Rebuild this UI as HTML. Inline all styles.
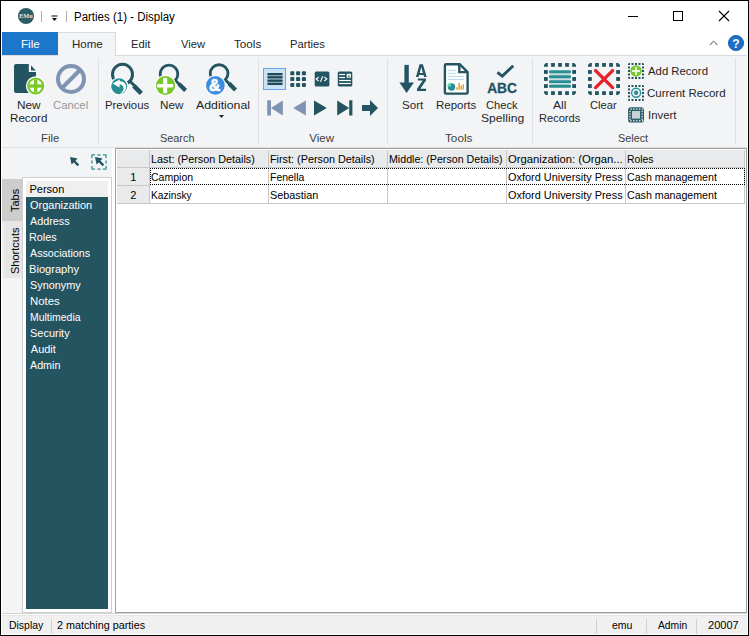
<!DOCTYPE html>
<html><head><meta charset="utf-8">
<style>
*{box-sizing:border-box;margin:0;padding:0}
html,body{width:749px;height:636px;overflow:hidden;background:#fff}
body{position:relative;font-family:"Liberation Sans",sans-serif;color:#000}
.a{position:absolute}
.t{position:absolute;white-space:nowrap;line-height:1;transform-origin:0 0}
.r{background:#f3f4f6}
.lbl{font-size:11.5px;color:#3c3c3c}
.grp{font-size:11.5px;color:#555}
.g{font-size:11px;color:#000}
svg{position:absolute;overflow:visible}
</style></head><body>
<!-- window frame -->
<div class="a" style="left:0;top:0;width:749px;height:636px;border:1px solid #000"></div>

<!-- title bar -->
<svg style="left:18px;top:8px" width="16" height="16" viewBox="0 0 16 16"><circle cx="8" cy="8" r="8" fill="#2c5c66"/><text x="1.2" y="10.3" font-family="Liberation Serif" font-size="6.6" font-weight="bold" fill="#dfe8ea" textLength="13.6" lengthAdjust="spacingAndGlyphs">EMu</text></svg>
<div class="a" style="left:41px;top:11px;width:1px;height:11px;background:#b0b0b0"></div>
<svg style="left:51px;top:15px" width="7" height="7" viewBox="0 0 7 7"><rect x="0.5" y="0.5" width="6" height="1" fill="#000"/><path d="M1 3 L6 3 L3.5 6 Z" fill="#000"/></svg>
<div class="a" style="left:66px;top:11px;width:1px;height:11px;background:#b0b0b0"></div>
<!-- caption buttons -->
<div class="a" style="left:628px;top:16px;width:10px;height:1px;background:#000"></div>
<div class="a" style="left:673px;top:11px;width:10px;height:10px;border:1px solid #000"></div>
<svg style="left:719px;top:11px" width="10" height="10" viewBox="0 0 10 10"><path d="M0 0 L10 10 M10 0 L0 10" stroke="#000" stroke-width="1.1"/></svg>

<!-- tab row -->
<div class="a" style="left:2px;top:32px;width:56px;height:23px;background:#1c76ca"></div>
<div class="a r" style="left:58px;top:32px;width:58px;height:24px;border-top:1px solid #dadbdc;border-right:1px solid #dadbdc"></div>
<svg style="left:709px;top:40px" width="10" height="6" viewBox="0 0 10 6"><path d="M0.8 5 L4.5 1.2 L8.5 5" stroke="#888" stroke-width="1.1" fill="none"/></svg>
<svg style="left:728px;top:35px" width="16" height="16" viewBox="0 0 16 16"><circle cx="8" cy="8" r="7.6" fill="#1a6fc6" stroke="#0d4f9a" stroke-width="0.8"/><text x="8" y="12.5" font-family="Liberation Sans" font-weight="bold" font-size="12" fill="#fff" text-anchor="middle">?</text></svg>

<!-- ribbon -->
<div class="a" style="left:2px;top:55px;width:56px;height:1px;background:#dadbdc"></div>
<div class="a" style="left:116px;top:55px;width:631px;height:1px;background:#dadbdc"></div>
<div class="a r" style="left:2px;top:56px;width:745px;height:91px"></div>
<div class="a" style="left:2px;top:147px;width:745px;height:1px;background:#dfe0e1"></div>
<div class="a" style="left:98px;top:58px;width:1px;height:86px;background:#e0e1e3"></div>
<div class="a" style="left:258px;top:58px;width:1px;height:86px;background:#e0e1e3"></div>
<div class="a" style="left:387px;top:58px;width:1px;height:86px;background:#e0e1e3"></div>
<div class="a" style="left:532px;top:58px;width:1px;height:86px;background:#e0e1e3"></div>
<div class="a" style="left:735px;top:58px;width:1px;height:86px;background:#e0e1e3"></div>

<!-- ribbon labels -->
<svg style="left:219px;top:115px" width="6" height="4" viewBox="0 0 6 4"><path d="M0 0 L5 0 L2.5 3 Z" fill="#222"/></svg>

<!-- left panel -->
<div class="a r" style="left:2px;top:148px;width:110px;height:465px"></div>
<div class="a" style="left:112px;top:148px;width:3px;height:465px;background:#fff"></div>
<!-- vertical tabs -->
<div class="a" style="left:2px;top:179px;width:20px;height:42px;background:#cdcdcd"></div>
<div class="a" style="left:2px;top:221px;width:20px;height:57px;background:#e6e6e6;border-left:2px solid #eeeeee"></div>
<!-- tab panel frame -->
<div class="a" style="left:22px;top:177px;width:90px;height:436px;border:1px solid #d0d0d0;background:#fff"></div>
<div class="a" style="left:26px;top:181px;width:82px;height:16px;background:#efefef"></div>
<div class="a" style="left:26px;top:197px;width:82px;height:412px;background:#255461"></div>

<!-- grid -->
<div class="a" style="left:115px;top:148px;width:632px;height:465px;border:1px solid #a0a0a0;border-right:1px solid #a0a0a0;background:#fff"></div>
<div class="a" style="left:117px;top:150px;width:628px;height:17px;background:#e9eaec"></div>
<div class="a" style="left:117px;top:167px;width:628px;height:1px;background:#c8c8c8"></div>
<div class="a" style="left:117px;top:168px;width:32px;height:35px;background:#e9eaec"></div>
<div class="a" style="left:117px;top:185px;width:32px;height:1px;background:#c8c8c8"></div>
<div class="a" style="left:117px;top:203px;width:628px;height:1px;background:#c8c8c8"></div>
<div class="a" style="left:149px;top:150px;width:1px;height:53px;background:#c8c8c8"></div>
<div class="a" style="left:268px;top:150px;width:1px;height:53px;background:#c8c8c8"></div>
<div class="a" style="left:387px;top:150px;width:1px;height:53px;background:#c8c8c8"></div>
<div class="a" style="left:506px;top:150px;width:1px;height:53px;background:#c8c8c8"></div>
<div class="a" style="left:625px;top:150px;width:1px;height:53px;background:#c8c8c8"></div>
<div class="a" style="left:744px;top:150px;width:1px;height:53px;background:#c8c8c8"></div>
<div class="a" style="left:150px;top:168px;width:595px;height:17px;border:1px dotted #000"></div>

<!-- status bar -->
<div class="a" style="left:2px;top:613px;width:745px;height:1px;background:#d2d2d2"></div>
<div class="a" style="left:2px;top:615px;width:745px;height:1px;background:#e6e6e6"></div>
<div class="a" style="left:2px;top:616px;width:745px;height:18px;background:#f0f0f0"></div>
<div class="a" style="left:51px;top:619px;width:1px;height:15px;background:#d0d0d0"></div>
<div class="a" style="left:596px;top:619px;width:1px;height:15px;background:#d0d0d0"></div>
<div class="a" style="left:646px;top:619px;width:1px;height:15px;background:#d0d0d0"></div>
<div class="a" style="left:696px;top:619px;width:1px;height:15px;background:#d0d0d0"></div>

<div class="t" style="left:10.3px;top:211.5px;font-size:11px;transform:rotate(-90deg);transform-origin:0 0">Tabs</div>
<div class="t" style="left:10.3px;top:274px;font-size:11px;transform:rotate(-90deg);transform-origin:0 0">Shortcuts</div>
<div class="t" style="left:74.14px;top:11px;font-size:12px;font-weight:400;color:#000;transform:scaleX(0.957)">Parties (1) - Display</div>
<div class="t" style="left:20.79px;top:39px;font-size:11.5px;font-weight:400;color:#fff;transform:scaleX(1.006)">File</div>
<div class="t" style="left:71.60px;top:39px;font-size:11.5px;font-weight:400;color:#262626;transform:scaleX(1.003)">Home</div>
<div class="t" style="left:131.13px;top:39px;font-size:11.5px;font-weight:400;color:#262626;transform:scaleX(0.974)">Edit</div>
<div class="t" style="left:180.90px;top:39px;font-size:11.5px;font-weight:400;color:#262626;transform:scaleX(0.968)">View</div>
<div class="t" style="left:234.20px;top:39px;font-size:11.5px;font-weight:400;color:#262626;transform:scaleX(1.015)">Tools</div>
<div class="t" style="left:290.43px;top:39px;font-size:11.5px;font-weight:400;color:#262626;transform:scaleX(0.974)">Parties</div>
<div class="t" style="left:16.78px;top:100px;font-size:11.5px;font-weight:400;color:#262626;transform:scaleX(1.023)">New</div>
<div class="t" style="left:9.59px;top:113px;font-size:11.5px;font-weight:400;color:#262626;transform:scaleX(1.009)">Record</div>
<div class="t" style="left:52.72px;top:100px;font-size:11.5px;font-weight:400;color:#999;transform:scaleX(0.982)">Cancel</div>
<div class="t" style="left:41.02px;top:133px;font-size:11.5px;font-weight:400;color:#3e3e3e;transform:scaleX(0.982)">File</div>
<div class="t" style="left:104.51px;top:100px;font-size:11.5px;font-weight:400;color:#262626;transform:scaleX(0.986)">Previous</div>
<div class="t" style="left:159.79px;top:100px;font-size:11.5px;font-weight:400;color:#262626;transform:scaleX(1.014)">New</div>
<div class="t" style="left:195.50px;top:100px;font-size:11.5px;font-weight:400;color:#262626;transform:scaleX(1.070)">Additional</div>
<div class="t" style="left:159.85px;top:133px;font-size:11.5px;font-weight:400;color:#3e3e3e;transform:scaleX(0.946)">Search</div>
<div class="t" style="left:309.30px;top:133px;font-size:11.5px;font-weight:400;color:#3e3e3e;transform:scaleX(1.000)">View</div>
<div class="t" style="left:401.90px;top:100px;font-size:11.5px;font-weight:400;color:#262626;transform:scaleX(1.005)">Sort</div>
<div class="t" style="left:436.00px;top:100px;font-size:11.5px;font-weight:400;color:#262626;transform:scaleX(0.997)">Reports</div>
<div class="t" style="left:486.13px;top:100px;font-size:11.5px;font-weight:400;color:#262626;transform:scaleX(0.971)">Check</div>
<div class="t" style="left:481.05px;top:113px;font-size:11.5px;font-weight:400;color:#262626;transform:scaleX(1.054)">Spelling</div>
<div class="t" style="left:445.40px;top:133px;font-size:11.5px;font-weight:400;color:#3e3e3e;transform:scaleX(1.019)">Tools</div>
<div class="t" style="left:553.30px;top:100px;font-size:11.5px;font-weight:400;color:#262626;transform:scaleX(1.058)">All</div>
<div class="t" style="left:538.94px;top:113px;font-size:11.5px;font-weight:400;color:#262626;transform:scaleX(0.963)">Records</div>
<div class="t" style="left:589.83px;top:100px;font-size:11.5px;font-weight:400;color:#262626;transform:scaleX(0.973)">Clear</div>
<div class="t" style="left:617.96px;top:133px;font-size:11.5px;font-weight:400;color:#3e3e3e;transform:scaleX(0.942)">Select</div>
<div class="t" style="left:647.90px;top:66px;font-size:11.5px;font-weight:400;color:#262626;transform:scaleX(0.987)">Add Record</div>
<div class="t" style="left:646.90px;top:88px;font-size:11.5px;font-weight:400;color:#262626;transform:scaleX(0.999)">Current Record</div>
<div class="t" style="left:647.51px;top:110px;font-size:11.5px;font-weight:400;color:#262626;transform:scaleX(0.986)">Invert</div>
<div class="t" style="left:151.12px;top:154px;font-size:11px;font-weight:400;color:#000;transform:scaleX(0.982)">Last: (Person Details)</div>
<div class="t" style="left:270.02px;top:154px;font-size:11px;font-weight:400;color:#000;transform:scaleX(0.984)">First: (Person Details)</div>
<div class="t" style="left:389.23px;top:154px;font-size:11px;font-weight:400;color:#000;transform:scaleX(0.968)">Middle: (Person Details)</div>
<div class="t" style="left:508.08px;top:154px;font-size:11px;font-weight:400;color:#000;transform:scaleX(1.025)">Organization: (Organ...</div>
<div class="t" style="left:626.86px;top:154px;font-size:11px;font-weight:400;color:#000;transform:scaleX(0.944)">Roles</div>
<div class="t" style="left:130.30px;top:172px;font-size:11px;font-weight:400;color:#000;transform:scaleX(1.000)">1</div>
<div class="t" style="left:130.30px;top:190px;font-size:11px;font-weight:400;color:#000;transform:scaleX(1.000)">2</div>
<div class="t" style="left:151.14px;top:172px;font-size:11px;font-weight:400;color:#000;transform:scaleX(0.957)">Campion</div>
<div class="t" style="left:270.05px;top:172px;font-size:11px;font-weight:400;color:#000;transform:scaleX(0.951)">Fenella</div>
<div class="t" style="left:508.11px;top:172px;font-size:11px;font-weight:400;color:#000;transform:scaleX(0.992)">Oxford University Press</div>
<div class="t" style="left:626.83px;top:172px;font-size:11px;font-weight:400;color:#000;transform:scaleX(0.967)">Cash management</div>
<div class="t" style="left:151.18px;top:190px;font-size:11px;font-weight:400;color:#000;transform:scaleX(0.923)">Kazinsky</div>
<div class="t" style="left:270.01px;top:190px;font-size:11px;font-weight:400;color:#000;transform:scaleX(0.985)">Sebastian</div>
<div class="t" style="left:508.11px;top:190px;font-size:11px;font-weight:400;color:#000;transform:scaleX(0.992)">Oxford University Press</div>
<div class="t" style="left:626.83px;top:190px;font-size:11px;font-weight:400;color:#000;transform:scaleX(0.967)">Cash management</div>
<div class="t" style="left:29.50px;top:184px;font-size:11px;font-weight:400;color:#000;transform:scaleX(1.000)">Person</div>
<div class="t" style="left:29.90px;top:200px;font-size:11px;font-weight:400;color:#fff;transform:scaleX(0.997)">Organization</div>
<div class="t" style="left:30.30px;top:216px;font-size:11px;font-weight:400;color:#fff;transform:scaleX(0.982)">Address</div>
<div class="t" style="left:29.31px;top:232px;font-size:11px;font-weight:400;color:#fff;transform:scaleX(0.985)">Roles</div>
<div class="t" style="left:30.30px;top:248px;font-size:11px;font-weight:400;color:#fff;transform:scaleX(0.974)">Associations</div>
<div class="t" style="left:29.19px;top:264px;font-size:11px;font-weight:400;color:#fff;transform:scaleX(1.010)">Biography</div>
<div class="t" style="left:29.81px;top:280px;font-size:11px;font-weight:400;color:#fff;transform:scaleX(0.988)">Synonymy</div>
<div class="t" style="left:29.76px;top:296px;font-size:11px;font-weight:400;color:#fff;transform:scaleX(1.037)">Notes</div>
<div class="t" style="left:29.85px;top:312px;font-size:11px;font-weight:400;color:#fff;transform:scaleX(0.950)">Multimedia</div>
<div class="t" style="left:29.80px;top:328px;font-size:11px;font-weight:400;color:#fff;transform:scaleX(0.997)">Security</div>
<div class="t" style="left:30.80px;top:344px;font-size:11px;font-weight:400;color:#fff;transform:scaleX(1.000)">Audit</div>
<div class="t" style="left:30.20px;top:360px;font-size:11px;font-weight:400;color:#fff;transform:scaleX(0.973)">Admin</div>
<div class="t" style="left:9.15px;top:620px;font-size:11px;font-weight:400;color:#000;transform:scaleX(0.949)">Display</div>
<div class="t" style="left:57.42px;top:620px;font-size:11px;font-weight:400;color:#000;transform:scaleX(0.980)">2 matching parties</div>
<div class="t" style="left:612.24px;top:620px;font-size:11px;font-weight:400;color:#000;transform:scaleX(0.955)">emu</div>
<div class="t" style="left:658.20px;top:620px;font-size:11px;font-weight:400;color:#000;transform:scaleX(0.937)">Admin</div>
<div class="t" style="left:707.80px;top:620px;font-size:11px;font-weight:400;color:#000;transform:scaleX(1.003)">20007</div>
<svg style="left:0;top:0" width="749" height="150" viewBox="0 0 749 150">
<path d="M16 64 H28.8 V72 H36 V91 Q36 93 34 93 H16 Q14 93 14 91 V66 Q14 64 16 64 Z" fill="#235461"/>
<path d="M31 65.5 V70.5 H35.8 Z" fill="#235461"/>
<circle cx="35.7" cy="86" r="9.8" fill="#fff"/>
<circle cx="35.7" cy="86" r="7.5" fill="#fff" stroke="#78c82c" stroke-width="2.2"/>
<rect x="29.2" y="84.3" width="13" height="3.4" fill="#78c82c"/><rect x="34" y="79.6" width="3.4" height="12.8" fill="#78c82c"/>
<circle cx="71" cy="79" r="13" fill="none" stroke="#7f93b3" stroke-width="4"/>
<path d="M80.5 69.5 L61.5 88.5" stroke="#7f93b3" stroke-width="4"/>
<circle cx="122.5" cy="74.3" r="10" fill="none" stroke="#235461" stroke-width="3"/>
<path d="M130 81.3 L134.5 85.8" stroke="#235461" stroke-width="3"/>
<path d="M133.8 85.8 L141.3 93.3" stroke="#235461" stroke-width="4.6"/>
<circle cx="119.2" cy="86.3" r="9.2" fill="#fff"/>
<circle cx="119.2" cy="86.3" r="8" fill="#2a8f94"/>
<path d="M112.6 83.4 L119.8 79.4 L119.7 81.3 C124 81.2 126.4 84.5 126.1 87.6 C125.8 91 123.2 93.6 120 94.1 L121.6 92.4 C123.6 91 124.1 88.6 123.1 86.6 C122.1 84.8 120.6 84.4 119.6 84.7 L119.5 87.5 Z" fill="#fff"/>
<circle cx="169" cy="74" r="8.85" fill="none" stroke="#235461" stroke-width="2.8"/>
<path d="M175 80 L179.5 84.5" stroke="#235461" stroke-width="2.8"/>
<path d="M179 84 L185.6 90.6" stroke="#235461" stroke-width="4.2"/>
<circle cx="165.5" cy="85.5" r="10.6" fill="#fff"/>
<circle cx="165.5" cy="85.5" r="9.6" fill="#78c82c"/>
<rect x="157.1" y="83.9" width="16.1" height="3.5" rx="0.8" fill="#fff"/><rect x="163.2" y="77.9" width="4" height="15.4" rx="0.8" fill="#fff"/>
<circle cx="219.1" cy="73.6" r="8.85" fill="none" stroke="#235461" stroke-width="2.8"/>
<path d="M225 79.5 L229.5 84" stroke="#235461" stroke-width="2.8"/>
<path d="M229 83.5 L235.5 90" stroke="#235461" stroke-width="4.2"/>
<circle cx="215.4" cy="85.4" r="10.4" fill="#fff"/>
<circle cx="215.4" cy="85.4" r="9.35" fill="#3d8ee0"/>
<text x="214.7" y="91.3" font-family="Liberation Sans" font-weight="bold" font-size="17" fill="#fff" stroke="#fff" stroke-width="0.7" text-anchor="middle" transform="translate(214.7 0) scale(0.92 1) translate(-214.7 0)">&amp;</text>
<rect x="263.5" y="68.5" width="22" height="21" fill="#cce3f7" stroke="#67a5ea" stroke-width="1"/>
<rect x="267.5" y="73.5" width="15" height="10.5" fill="#8ba6ae"/>
<rect x="267.3" y="73" width="15.4" height="2" rx="1" fill="#1d4c57"/>
<rect x="267.3" y="76.3" width="15.4" height="2" rx="1" fill="#1d4c57"/>
<rect x="267.3" y="79.7" width="15.4" height="2" rx="1" fill="#1d4c57"/>
<rect x="267.3" y="83" width="15.4" height="2" rx="1" fill="#1d4c57"/>
<rect x="290.3" y="71.3" width="4" height="4" rx="0.9" fill="#235461"/>
<rect x="296.1" y="71.3" width="4" height="4" rx="0.9" fill="#235461"/>
<rect x="301.9" y="71.3" width="4" height="4" rx="0.9" fill="#235461"/>
<rect x="290.3" y="77.1" width="4" height="4" rx="0.9" fill="#235461"/>
<rect x="296.1" y="77.1" width="4" height="4" rx="0.9" fill="#235461"/>
<rect x="301.9" y="77.1" width="4" height="4" rx="0.9" fill="#235461"/>
<rect x="290.3" y="82.9" width="4" height="4" rx="0.9" fill="#235461"/>
<rect x="296.1" y="82.9" width="4" height="4" rx="0.9" fill="#235461"/>
<rect x="301.9" y="82.9" width="4" height="4" rx="0.9" fill="#235461"/>
<rect x="314.7" y="71.5" width="14.7" height="15" rx="1.5" fill="#235461"/>
<path d="M318.6 77 L316.2 79 L318.6 81 M322.7 76.3 L320.5 81.7 M324.4 77 L326.8 79 L324.4 81" stroke="#fff" stroke-width="1.1" fill="none"/>
<rect x="337.8" y="71.5" width="14.5" height="15" rx="1.5" fill="#235461"/>
<rect x="339.2" y="73.9" width="5.8" height="1.2" fill="#fff"/><rect x="339.2" y="76.9" width="5.8" height="1.2" fill="#fff"/>
<rect x="339.2" y="79.9" width="11.7" height="1.2" fill="#fff"/><rect x="339.2" y="82.9" width="11.7" height="1.2" fill="#fff"/>
<rect x="346.6" y="73.8" width="4.3" height="3.9" fill="#fff"/><rect x="347.6" y="75.6" width="2.4" height="1.2" fill="#4d7580"/>
<rect x="267.2" y="100.3" width="3.8" height="15.2" fill="#7f93b3"/><path d="M271 107.9 L282.8 100.4 V115.4 Z" fill="#7f93b3"/>
<path d="M293.2 107.9 L305.9 100.4 V115.4 Z" fill="#7f93b3"/>
<path d="M314 100.4 V115.4 L326.8 107.9 Z" fill="#235461"/>
<path d="M337.2 100.4 V115.4 L349.2 107.9 Z" fill="#235461"/><rect x="349.2" y="100.3" width="3.2" height="15.2" fill="#235461"/>
<rect x="362" y="105" width="8.5" height="6" fill="#235461"/><path d="M370 100 L378 108 L370 116 Z" fill="#235461"/>
<rect x="404.4" y="64.9" width="4.4" height="18" fill="#235461"/><path d="M399.4 82.5 H413.9 L406.6 92.9 Z" fill="#235461"/>
<path fill-rule="evenodd" d="M415.9 76.9 L419.6 64.3 H422.9 L426.7 76.9 H424.1 L423.5 75 H419.1 L418.5 76.9 Z M419.7 73.1 H422.9 L421.3 67 Z" fill="#235461"/>
<path d="M417.8 78.4 H426 V80.6 L420.3 88.8 H426.1 V91 H417 V88.8 L422.7 80.6 H417.8 Z" fill="#235461"/>
<path d="M446.1 64.2 H459.6 L467.6 72.2 V92.4 Q467.6 93.6 466.4 93.6 H446.1 Q444.9 93.6 444.9 92.4 V65.4 Q444.9 64.2 446.1 64.2 Z" fill="#fff" stroke="#235461" stroke-width="2.4" stroke-linejoin="round"/>
<path d="M459.3 64.2 V72.1 H467.6" fill="none" stroke="#235461" stroke-width="2.4"/>
<rect x="448" y="69.8" width="8" height="1.1" fill="#bcdaf0"/>
<rect x="448" y="72.8" width="8" height="1.1" fill="#bcdaf0"/>
<rect x="448" y="75.9" width="16" height="1.1" fill="#bcdaf0"/>
<rect x="448" y="78.9" width="16" height="1.1" fill="#bcdaf0"/>
<circle cx="451.5" cy="87" r="3.7" fill="#2a8f94"/><path d="M451 86.4 H447.3 A3.7 3.7 0 0 1 451 82.7 Z" fill="#5fd8b4"/>
<rect x="456.3" y="87.2" width="1.4" height="2.5" fill="#e59c2c"/>
<rect x="458.4" y="83" width="1.4" height="6.7" fill="#e59c2c"/>
<rect x="460.5" y="85.6" width="1.4" height="4.1" fill="#e59c2c"/>
<rect x="462.6" y="84.2" width="1.4" height="5.5" fill="#e59c2c"/>
<path d="M497.4 72.3 L502.3 76.1 L513.2 65.7" fill="none" stroke="#235461" stroke-width="2.9"/>
<text x="487.2" y="92.6" font-family="Liberation Sans" font-weight="bold" font-size="15.2" fill="#235461" stroke="#235461" stroke-width="0.3" textLength="29.8" lengthAdjust="spacingAndGlyphs">ABC</text>
<path d="M545.90 63.00 H547.80 V66.80 H544.00 V64.90 Z" fill="#235461"/><rect x="544.00" y="70.05" width="3.8" height="3.8" fill="#235461"/><rect x="544.00" y="77.10" width="3.8" height="3.8" fill="#235461"/><rect x="544.00" y="84.15" width="3.8" height="3.8" fill="#235461"/><path d="M544.00 91.20 H547.80 V95.00 H545.90 L544.00 93.10 Z" fill="#235461"/><rect x="551.05" y="63.00" width="3.8" height="3.8" fill="#235461"/><rect x="551.05" y="91.20" width="3.8" height="3.8" fill="#235461"/><rect x="558.10" y="63.00" width="3.8" height="3.8" fill="#235461"/><rect x="558.10" y="91.20" width="3.8" height="3.8" fill="#235461"/><rect x="565.15" y="63.00" width="3.8" height="3.8" fill="#235461"/><rect x="565.15" y="91.20" width="3.8" height="3.8" fill="#235461"/><path d="M572.20 63.00 H574.10 L576.00 64.90 V66.80 H572.20 Z" fill="#235461"/><rect x="572.20" y="70.05" width="3.8" height="3.8" fill="#235461"/><rect x="572.20" y="77.10" width="3.8" height="3.8" fill="#235461"/><rect x="572.20" y="84.15" width="3.8" height="3.8" fill="#235461"/><path d="M572.20 91.20 H576.00 V93.10 L574.10 95.00 H572.20 Z" fill="#235461"/>
<rect x="549.5" y="72" width="21" height="14" fill="#c8dfe0"/>
<rect x="549" y="70.3" width="22" height="2.9" rx="1.2" fill="#2a8f94"/>
<rect x="549" y="75.3" width="22" height="2.9" rx="1.2" fill="#2a8f94"/>
<rect x="549" y="80.2" width="22" height="2.9" rx="1.2" fill="#2a8f94"/>
<rect x="549" y="84.8" width="22" height="2.9" rx="1.2" fill="#2a8f94"/>
<path d="M589.90 63.00 H591.80 V66.80 H588.00 V64.90 Z" fill="#235461"/><rect x="588.00" y="70.05" width="3.8" height="3.8" fill="#235461"/><rect x="588.00" y="77.10" width="3.8" height="3.8" fill="#235461"/><rect x="588.00" y="84.15" width="3.8" height="3.8" fill="#235461"/><path d="M588.00 91.20 H591.80 V95.00 H589.90 L588.00 93.10 Z" fill="#235461"/><rect x="595.05" y="63.00" width="3.8" height="3.8" fill="#235461"/><rect x="595.05" y="91.20" width="3.8" height="3.8" fill="#235461"/><rect x="602.10" y="63.00" width="3.8" height="3.8" fill="#235461"/><rect x="602.10" y="91.20" width="3.8" height="3.8" fill="#235461"/><rect x="609.15" y="63.00" width="3.8" height="3.8" fill="#235461"/><rect x="609.15" y="91.20" width="3.8" height="3.8" fill="#235461"/><path d="M616.20 63.00 H618.10 L620.00 64.90 V66.80 H616.20 Z" fill="#235461"/><rect x="616.20" y="70.05" width="3.8" height="3.8" fill="#235461"/><rect x="616.20" y="77.10" width="3.8" height="3.8" fill="#235461"/><rect x="616.20" y="84.15" width="3.8" height="3.8" fill="#235461"/><path d="M616.20 91.20 H620.00 V93.10 L618.10 95.00 H616.20 Z" fill="#235461"/>
<path d="M595.6 70.6 L612.6 87.6 M612.6 70.6 L595.6 87.6" stroke="#e8202a" stroke-width="3.3" stroke-linecap="round"/>
<path d="M629.00 63.00 H630.00 V65.00 H628.00 V64.00 Z" fill="#235461"/><rect x="628.00" y="66.50" width="2" height="2" fill="#235461"/><rect x="628.00" y="70.00" width="2" height="2" fill="#235461"/><rect x="628.00" y="73.50" width="2" height="2" fill="#235461"/><path d="M628.00 77.00 H630.00 V79.00 H629.00 L628.00 78.00 Z" fill="#235461"/><rect x="631.50" y="63.00" width="2" height="2" fill="#235461"/><rect x="631.50" y="77.00" width="2" height="2" fill="#235461"/><rect x="635.00" y="63.00" width="2" height="2" fill="#235461"/><rect x="635.00" y="77.00" width="2" height="2" fill="#235461"/><rect x="638.50" y="63.00" width="2" height="2" fill="#235461"/><rect x="638.50" y="77.00" width="2" height="2" fill="#235461"/><path d="M642.00 63.00 H643.00 L644.00 64.00 V65.00 H642.00 Z" fill="#235461"/><rect x="642.00" y="66.50" width="2" height="2" fill="#235461"/><rect x="642.00" y="70.00" width="2" height="2" fill="#235461"/><rect x="642.00" y="73.50" width="2" height="2" fill="#235461"/><path d="M642.00 77.00 H644.00 V78.00 L643.00 79.00 H642.00 Z" fill="#235461"/>
<circle cx="636" cy="71" r="5.8" fill="#78c82c"/><rect x="632" y="70.2" width="8" height="1.6" fill="#fff"/><rect x="635.2" y="67" width="1.6" height="8" fill="#fff"/>
<path d="M629.00 85.00 H630.00 V87.00 H628.00 V86.00 Z" fill="#235461"/><rect x="628.00" y="88.50" width="2" height="2" fill="#235461"/><rect x="628.00" y="92.00" width="2" height="2" fill="#235461"/><rect x="628.00" y="95.50" width="2" height="2" fill="#235461"/><path d="M628.00 99.00 H630.00 V101.00 H629.00 L628.00 100.00 Z" fill="#235461"/><rect x="631.50" y="85.00" width="2" height="2" fill="#235461"/><rect x="631.50" y="99.00" width="2" height="2" fill="#235461"/><rect x="635.00" y="85.00" width="2" height="2" fill="#235461"/><rect x="635.00" y="99.00" width="2" height="2" fill="#235461"/><rect x="638.50" y="85.00" width="2" height="2" fill="#235461"/><rect x="638.50" y="99.00" width="2" height="2" fill="#235461"/><path d="M642.00 85.00 H643.00 L644.00 86.00 V87.00 H642.00 Z" fill="#235461"/><rect x="642.00" y="88.50" width="2" height="2" fill="#235461"/><rect x="642.00" y="92.00" width="2" height="2" fill="#235461"/><rect x="642.00" y="95.50" width="2" height="2" fill="#235461"/><path d="M642.00 99.00 H644.00 V100.00 L643.00 101.00 H642.00 Z" fill="#235461"/>
<circle cx="636.1" cy="92.8" r="4.5" fill="none" stroke="#2a8f94" stroke-width="1.4"/><circle cx="636.1" cy="92.8" r="2.2" fill="#2a8f94"/>
<rect x="628.1" y="107.3" width="15.9" height="15.2" rx="2.6" fill="#2e5e69"/>
<rect x="632" y="111" width="8" height="7.6" fill="#c5d2d6"/>
<rect x="630.30" y="108.5" width="1.4" height="1.2" fill="#fff"/><rect x="630.30" y="120.2" width="1.4" height="1.2" fill="#fff"/>
<rect x="633.20" y="108.5" width="1.4" height="1.2" fill="#fff"/><rect x="633.20" y="120.2" width="1.4" height="1.2" fill="#fff"/>
<rect x="636.10" y="108.5" width="1.4" height="1.2" fill="#fff"/><rect x="636.10" y="120.2" width="1.4" height="1.2" fill="#fff"/>
<rect x="639.00" y="108.5" width="1.4" height="1.2" fill="#fff"/><rect x="639.00" y="120.2" width="1.4" height="1.2" fill="#fff"/>
<rect x="641.90" y="108.5" width="1.4" height="1.2" fill="#fff"/><rect x="641.90" y="120.2" width="1.4" height="1.2" fill="#fff"/>
<rect x="629.4" y="110.90" width="1.2" height="1.3" fill="#fff"/><rect x="641.5" y="110.90" width="1.2" height="1.3" fill="#fff"/>
<rect x="629.4" y="113.50" width="1.2" height="1.3" fill="#fff"/><rect x="641.5" y="113.50" width="1.2" height="1.3" fill="#fff"/>
<rect x="629.4" y="116.10" width="1.2" height="1.3" fill="#fff"/><rect x="641.5" y="116.10" width="1.2" height="1.3" fill="#fff"/>
<rect x="629.4" y="118.70" width="1.2" height="1.3" fill="#fff"/><rect x="641.5" y="118.70" width="1.2" height="1.3" fill="#fff"/>
<path d="M70 157 L77.6 158.6 L71.6 164.6 Z" fill="#235461"/><path d="M73 160 L78.4 165.4" stroke="#235461" stroke-width="2.4"/>
<path d="M91.9 158 V155.4 Q91.9 154.9 92.4 154.9 H95 M102.9 154.9 H105.6 Q106.1 154.9 106.1 155.4 V158 M106.1 166 V168.6 Q106.1 169.1 105.6 169.1 H102.9 M95 169.1 H92.4 Q91.9 169.1 91.9 168.6 V166 M97.4 154.9 H100.6 M97.4 169.1 H100.6 M91.9 160.4 V163.6 M106.1 160.4 V163.6" fill="none" stroke="#62adb0" stroke-width="1.8"/>
<path d="M95 157 L102.6 158.6 L96.6 164.6 Z" fill="#235461"/><path d="M98 160 L103.4 165.4" stroke="#235461" stroke-width="2.4"/>
</svg>
</body></html>
